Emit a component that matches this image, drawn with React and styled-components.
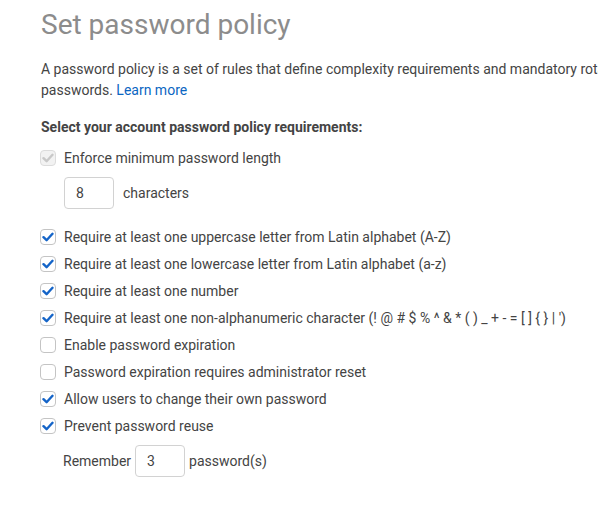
import React from "react";
import styled, { createGlobalStyle } from "styled-components";

const Global = createGlobalStyle`
  html, body { margin: 0; padding: 0; background: #fff; overflow: hidden; }
  body { font-family: Roboto, "Noto Sans", sans-serif; color: #444; }
`;

const Page = styled.div`
  padding: 9px 0 0 41px;
  width: 820px;
`;

const Title = styled.h1`
  margin: 0;
  font-size: 28px;
  line-height: 32px;
  font-weight: 400;
  color: #8c8c8c;
`;

const Intro = styled.p`
  margin: 18px 0 0;
  font-size: 14px;
  line-height: 21px;
  color: #444;
`;

const Link = styled.a`
  color: #0b66c2;
  text-decoration: none;
`;

const Heading = styled.div`
  margin-top: 16px;
  font-size: 14px;
  font-weight: 700;
  line-height: 20px;
  color: #444;
`;

const List = styled.div`
  margin-top: 7px;
  display: flex;
  flex-direction: column;
`;

const Row = styled.label`
  display: flex;
  align-items: center;
  gap: 8px;
  height: 27px;
  margin-left: -1px;
  font-size: 14px;
  color: #444;
  white-space: nowrap;
`;

const Box = styled.span`
  width: 16px;
  height: 16px;
  box-sizing: border-box;
  border: 1px solid ${(p) => (p.$disabled ? "#dcdcdc" : "#c4c4c4")};
  border-radius: 4px;
  background: ${(p) => (p.$disabled ? "#f2f2f2" : "#fff")};
  display: flex;
  align-items: center;
  justify-content: center;
  flex: none;
`;

const SubRow = styled.div`
  display: flex;
  align-items: center;
  gap: ${(p) => p.$gap}px;
  padding-left: ${(p) => p.$indent}px;
  font-size: 14px;
  color: #444;
  margin: ${(p) => p.$margin};
`;

const NumInput = styled.div`
  width: 50px;
  height: 32px;
  box-sizing: border-box;
  border: 1px solid #d2d2d2;
  border-radius: 4px;
  display: flex;
  align-items: center;
  padding-left: 11px;
  font-size: 14px;
  color: #444;
`;

function Check({ checked, disabled }) {
  return (
    <Box $disabled={disabled}>
      {checked && (
        <svg width="12" height="10" viewBox="0 0 12 10">
          <path
            d="M1.5 5.2 L4.6 8.2 L10.5 1.8"
            fill="none"
            stroke={disabled ? "#c8c8c8" : "#1464c8"}
            strokeWidth="2.4"
            strokeLinecap="round"
            strokeLinejoin="round"
          />
        </svg>
      )}
    </Box>
  );
}

function Option({ label, checked, disabled }) {
  return (
    <Row>
      <Check checked={checked} disabled={disabled} />
      <span>{label}</span>
    </Row>
  );
}

const items = [
  ["Require at least one uppercase letter from Latin alphabet (A-Z)", true],
  ["Require at least one lowercase letter from Latin alphabet (a-z)", true],
  ["Require at least one number", true],
  ["Require at least one non-alphanumeric character (! @ # $ % ^ & * ( ) _ + - = [ ] { } | ')", true],
  ["Enable password expiration", false],
  ["Password expiration requires administrator reset", false],
  ["Allow users to change their own password", true],
  ["Prevent password reuse", true],
];

export default function App() {
  return (
    <Page>
      <Global />
      <Title>Set password policy</Title>
      <Intro>
        A password policy is a set of rules that define complexity requirements and mandatory
        rotation periods for your IAM users'{" "}
        passwords. <Link href="#">Learn more</Link>
      </Intro>
      <Heading>Select your account password policy requirements:</Heading>
      <List>
        <Option label="Enforce minimum password length" checked disabled />
        <SubRow $indent={23} $gap={9} $margin="6px 0 14px">
          <NumInput>8</NumInput>
          <span>characters</span>
        </SubRow>
        {items.map(([l, c]) => (
          <Option key={l} label={l} checked={c} />
        ))}
        <SubRow $indent={22} $gap={4} $margin="6px 0 0">
          <span>Remember</span>
          <NumInput>3</NumInput>
          <span>password(s)</span>
        </SubRow>
      </List>
    </Page>
  );
}
